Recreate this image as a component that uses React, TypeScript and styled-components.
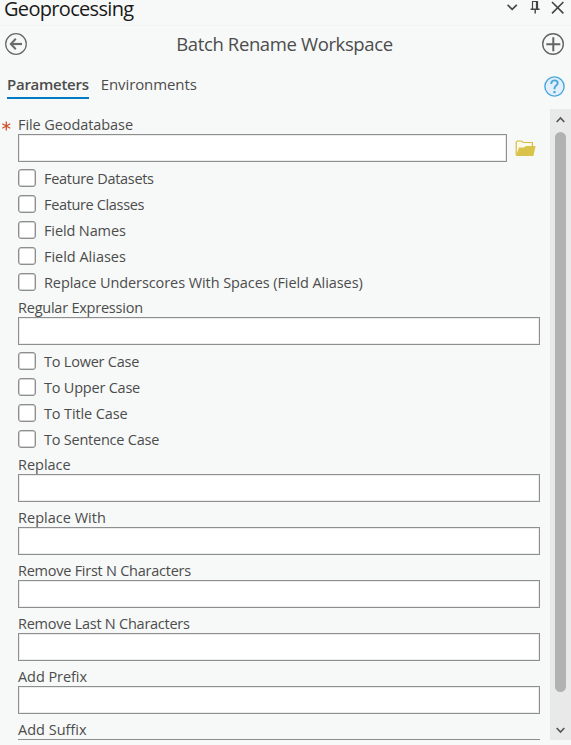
import React from "react";
import styled, { createGlobalStyle } from "styled-components";

const Global = createGlobalStyle`
  * { box-sizing: border-box; }
  html, body { margin: 0; overflow: hidden; background: #f7f9f8; }
  svg { display: block; flex: none; }
`;

const Pane = styled.main`
  width: 571px;
  height: 745px;
  display: flex;
  flex-direction: column;
  background: #f7f9f8;
  color: #4c4c4c;
  font-family: "Open Sans", "Noto Sans", sans-serif;
  font-size: 14.5px;
  overflow: hidden;
`;

const Text = styled.span<{ $spacing?: number }>`
  white-space: nowrap;
  letter-spacing: ${(p) => p.$spacing ?? -0.3}px;
`;

const TitleBar = styled.header`
  height: 26px;
  flex: none;
  display: flex;
  align-items: flex-start;
  justify-content: space-between;
  padding: 0 6px 0 4px;
  border-bottom: 1px solid #f2f4f3;
  color: #1a1a1a;
  font-size: 20px;
  line-height: 17px;
`;

const WindowButtons = styled.div`
  display: flex;
  align-items: flex-start;
`;

const ToolHeader = styled.div`
  height: 38px;
  flex: none;
  display: flex;
  align-items: center;
  justify-content: space-between;
  padding: 0 6px 2px 5px;
  font-size: 18.5px;
`;

const ToolName = styled(Text)`
  padding-bottom: 2px;
`;

const TabBar = styled.nav`
  height: 45px;
  flex: none;
  display: flex;
  align-items: flex-start;
  padding: 10px 6px 0 7px;
`;

const Tab = styled.button<{ $active?: boolean }>`
  height: 25px;
  display: flex;
  align-items: flex-start;
  margin-right: 12px;
  padding: 0;
  border: 0;
  border-bottom: 2px solid ${(p) => (p.$active ? "#007ac2" : "transparent")};
  background: none;
  color: inherit;
  font: inherit;
  font-size: 15px;
  font-weight: ${(p) => (p.$active ? 600 : 400)};
  line-height: 21px;
`;

const HelpSlot = styled.div`
  margin-left: auto;
  padding-top: 2px;
`;

const Body = styled.div`
  height: 631px;
  flex: none;
  display: flex;
  overflow: hidden;
`;

const Form = styled.form`
  flex: 1;
  padding: 3px 10px 0 18px;
`;

const Label = styled.label`
  height: 22px;
  display: flex;
  align-items: center;
  padding-top: 4px;
  line-height: 18px;
`;

const Required = styled.span`
  width: 17px;
  margin-left: -17px;
  padding-top: 2px;
`;

const InputRow = styled.div`
  display: flex;
  align-items: center;
  gap: 8px;
  margin-bottom: 3px;
`;

const Input = styled.input`
  flex: 1;
  min-width: 0;
  height: 28px;
  border: 1px solid #8e8e8e;
  border-radius: 0;
  background: #fff;
  box-shadow: inset 0 0 0 1px #ececec;
  outline: none;
`;

const FolderButton = styled.span`
  width: 25px;
`;

const CheckRow = styled.label`
  height: 26px;
  display: flex;
  align-items: center;
  gap: 8px;
`;

const CheckBox = styled.input.attrs({ type: "checkbox" })`
  appearance: none;
  width: 18px;
  height: 18px;
  flex: none;
  margin: 0;
  border: 1px solid #8e8e8e;
  border-radius: 3px;
  background: #fff;
  box-shadow: inset 0 0 0 0.5px #a8a8a8;
`;

const CheckText = styled(Text)`
  padding-top: 1px;
`;

const ScrollBar = styled.div`
  width: 21px;
  display: flex;
  flex-direction: column;
  align-items: center;
  padding: 7px 0 0;
  background: #e9e9e9;
`;

const Thumb = styled.div`
  width: 11px;
  height: 560px;
  flex: none;
  margin: 8px 0 34px;
  border-radius: 6px;
  background: #b2b2b2;
`;

const Chevron = ({ up = false }: { up?: boolean }) => (
  <svg width="9" height="8" viewBox="0 0 9 8" fill="none" stroke="#555" strokeWidth="1.6">
    <path d={up ? "M.7 6 4.5 2 8.3 6" : "M.7 2 4.5 6 8.3 2"} />
  </svg>
);

const BackIcon = () => (
  <svg width="22" height="22" viewBox="0 0 22 22" fill="none" stroke="#6a6a6a">
    <circle cx="11" cy="11" r="10.3" strokeWidth="1.3" />
    <path d="M17 11H6" strokeWidth="2.2" />
    <path d="m10.8 5.8-5 5.2 5 5.2" strokeWidth="2" />
  </svg>
);

const AddIcon = () => (
  <svg width="23" height="23" viewBox="0 0 23 23" fill="none" stroke="#646464">
    <circle cx="11" cy="11" r="10.3" strokeWidth="1.4" />
    <path d="M11.3 4.3v14M4.3 11.3h14" strokeWidth="2" />
  </svg>
);

const HelpIcon = () => (
  <svg width="21" height="21" viewBox="0 0 21 21" fill="none" stroke="#4ba6dc">
    <circle cx="10.5" cy="10.5" r="9.6" fill="#e2f0fb" strokeWidth="1.4" />
    <path d="M7.3 8V7.2a3.2 2.8 0 0 1 6.4 0c0 2.3-3.2 2.5-3.2 5.2v.8" strokeWidth="1.9" />
    <path d="M10.5 15v2.2" strokeWidth="2.2" />
  </svg>
);

const FolderIcon = () => (
  <svg width="21" height="17" viewBox="0 0 21 17">
    <path d="M1.2 15V2.2L2.4 1h4.3l1.5 1.5h9.2V7" fill="#fcfaea" stroke="#d8bd45" strokeWidth="1.2" />
    <path d="M.9 16 4 7.6h5L11 6h9.6L18.4 16Z" fill="#dac34a" />
  </svg>
);

const RequiredMark = () => (
  <svg width="10" height="10" viewBox="0 0 10 10" stroke="#cf4f2b" strokeWidth="1.3">
    <path d="M5.3 .5v9M1.3 2.7l8 4.6M9.3 2.7l-8 4.6" />
  </svg>
);

const DropIcon = () => (
  <svg width="12" height="16" viewBox="0 0 12 16" fill="none" stroke="#444" strokeWidth="1.6">
    <path d="m.6 4.9 4.6 4.5 4.6-4.5" />
  </svg>
);

const PinIcon = () => (
  <svg width="32" height="16" viewBox="0 0 32 16" fill="none" stroke="#444">
    <path d="M13.5 1.5v7.5M13 1.5h6" strokeWidth="1.2" />
    <path d="M18 1v8" strokeWidth="2.2" />
    <path d="M11.6 9.3h9M16.2 9v4.5" strokeWidth="1.4" />
  </svg>
);

const CloseIcon = () => (
  <svg width="14" height="16" viewBox="0 0 14 16" fill="none" stroke="#444" strokeWidth="1.6">
    <path d="m1 2 11.4 11.4M12.4 2 1 13.4" />
  </svg>
);

type Item = { text: string; spacing?: number };

const elements: Item[] = [
  { text: "Feature Datasets" },
  { text: "Feature Classes", spacing: -0.35 },
  { text: "Field Names", spacing: -0.12 },
  { text: "Field Aliases", spacing: -0.02 },
  { text: "Replace Underscores With Spaces (Field Aliases)", spacing: -0.08 },
];

const cases: Item[] = [
  { text: "To Lower Case", spacing: -0.22 },
  { text: "To Upper Case", spacing: -0.22 },
  { text: "To Title Case", spacing: -0.12 },
  { text: "To Sentence Case", spacing: -0.23 },
];

const edits: Item[] = [
  { text: "Replace", spacing: -0.02 },
  { text: "Replace With", spacing: 0.02 },
  { text: "Remove First N Characters", spacing: -0.25 },
  { text: "Remove Last N Characters", spacing: -0.25 },
  { text: "Add Prefix", spacing: -0.07 },
  { text: "Add Suffix", spacing: 0 },
];

const Option = ({ text, spacing }: Item) => (
  <CheckRow>
    <CheckBox />
    <CheckText $spacing={spacing}>{text}</CheckText>
  </CheckRow>
);

const Field = ({ text, spacing }: Item) => (
  <>
    <Label>
      <Text $spacing={spacing}>{text}</Text>
    </Label>
    <InputRow>
      <Input aria-label={text} />
    </InputRow>
  </>
);

export default function App() {
  return (
    <Pane>
      <Global />
      <TitleBar>
        <Text $spacing={-0.68}>Geoprocessing</Text>
        <WindowButtons>
          <DropIcon />
          <PinIcon />
          <CloseIcon />
        </WindowButtons>
      </TitleBar>
      <ToolHeader>
        <BackIcon />
        <ToolName $spacing={-0.38}>Batch Rename Workspace</ToolName>
        <AddIcon />
      </ToolHeader>
      <TabBar>
        <Tab $active>
          <Text $spacing={-0.27}>Parameters</Text>
        </Tab>
        <Tab>
          <Text $spacing={-0.1}>Environments</Text>
        </Tab>
        <HelpSlot>
          <HelpIcon />
        </HelpSlot>
      </TabBar>
      <Body>
        <Form>
          <Label>
            <Required>
              <RequiredMark />
            </Required>
            <Text $spacing={-0.08}>File Geodatabase</Text>
          </Label>
          <InputRow>
            <Input aria-label="File Geodatabase" />
            <FolderButton>
              <FolderIcon />
            </FolderButton>
          </InputRow>
          {elements.map((o) => (
            <Option key={o.text} {...o} />
          ))}
          <Field text="Regular Expression" spacing={-0.23} />
          {cases.map((o) => (
            <Option key={o.text} {...o} />
          ))}
          {edits.map((o) => (
            <Field key={o.text} {...o} />
          ))}
        </Form>
        <ScrollBar>
          <Chevron up />
          <Thumb />
          <Chevron />
        </ScrollBar>
      </Body>
    </Pane>
  );
}
